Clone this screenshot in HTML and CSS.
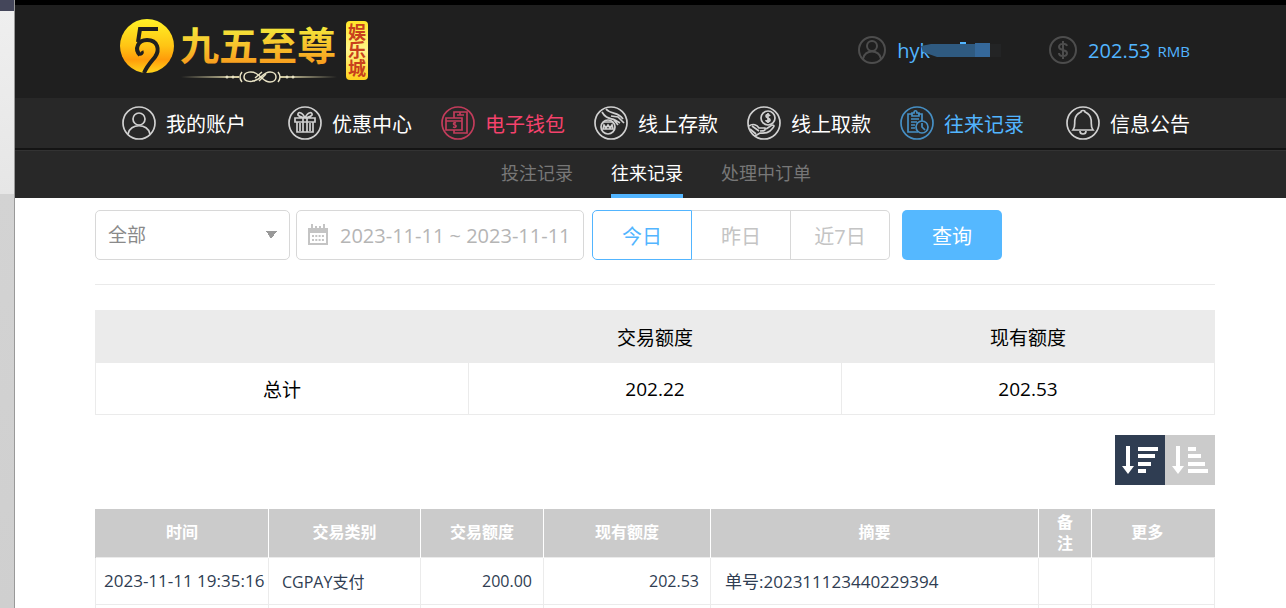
FILE: index.html
```html
<!DOCTYPE html>
<html lang="zh-CN">
<head>
    <meta charset="UTF-8">
    <meta name="viewport" content="width=device-width, initial-scale=1.0">
    <title>往来记录</title>
    <link rel="stylesheet" href="styles.css">
</head>
<body>
    <div class="edge"></div>
    <div class="page">
        <header class="header">
            <a href="#" class="logo" aria-label="九五至尊娱乐城">
                <svg width="252" height="68" viewBox="118 16 252 68">
                    <defs>
                        <linearGradient id="gold" x1="0" y1="0" x2="0" y2="1">
                            <stop offset="0" stop-color="#fff226"/>
                            <stop offset="0.5" stop-color="#ffc414"/>
                            <stop offset="0.75" stop-color="#ff9c0a"/>
                            <stop offset="1" stop-color="#ffd51c"/>
                        </linearGradient>
                        <linearGradient id="goldTag" x1="0" y1="0" x2="0" y2="1">
                            <stop offset="0" stop-color="#ffe629"/>
                            <stop offset="0.5" stop-color="#fff58a"/>
                            <stop offset="1" stop-color="#ffd01c"/>
                        </linearGradient>
                        <linearGradient id="goldText" x1="0" y1="0" x2="0" y2="1">
                            <stop offset="0.2" stop-color="#f4ea3c"/>
                            <stop offset="0.9" stop-color="#f89a1c"/>
                        </linearGradient>
                        <linearGradient id="line" x1="0" y1="0" x2="1" y2="0">
                            <stop offset="0" stop-color="#e8dfb0" stop-opacity="0"/>
                            <stop offset="0.4" stop-color="#e8dfb0"/>
                            <stop offset="0.6" stop-color="#e8dfb0"/>
                            <stop offset="1" stop-color="#e8dfb0" stop-opacity="0"/>
                        </linearGradient>
                    </defs>
                    <circle cx="147" cy="46" r="27" fill="url(#gold)"/>
                    <g fill="none" stroke="#1f1f1f" stroke-width="4">
                        <path d="M158 29H140L138 42"/>
                        <path d="M140 55C134 49 138 40 147 40C158 40 160 50 155 57C151 62 147 66 144 73"/>
                        <path d="M139 54C141 55 143 53 142 51" stroke-width="3"/>
                    </g>
                    <text x="180" y="60" class="logo-name" fill="url(#goldText)">九五至尊</text>
                    <rect x="181" y="76" width="156" height="2" fill="url(#line)"/>
                    <rect x="239" y="71" width="41" height="11" fill="#1f1f1f"/>
                    <g fill="none" stroke="#e8e2c4" stroke-width="1.5">
                        <path d="M242 72Q238 77 242 82M278 72Q282 77 278 82"/>
                        <path d="M257 79C253 83 244 82 244 77C244 71 253 71 257 74C263 78 264 82 270 82C278 82 278 72 270 72C262 72 260 82 252 81"/>
                        <path d="M255 78L262 72M259 81L266 74"/>
                    </g>
                    <g fill="#e8e2c4"><circle cx="227" cy="77" r="1.5"/><circle cx="233" cy="77" r="1.5"/><circle cx="287" cy="77" r="1.5"/><circle cx="293" cy="77" r="1.5"/></g>
                    <rect x="346" y="21" width="22" height="59" rx="4" fill="url(#goldTag)"/>
                    <text class="logo-tag" x="357" y="23">娱乐城</text>
                </svg>
            </a>
            <div class="user">
                <svg class="user-icon" viewBox="0 0 28 28"><circle cx="14" cy="14" r="13"/><circle cx="14" cy="10" r="5"/><path d="M5 23C6 13 22 13 23 23"/></svg>
                <span>hyk</span>
                <svg class="mask" width="80" height="20" viewBox="0 0 80 20">
                    <path d="M0 6L10 4H69V17H16L2 12Z" fill="#2f5a80"/>
                    <path d="M54 3H69V17H54Z" fill="#35689a"/>
                    <path d="M39 3H45" stroke="#52b5ff" stroke-width="2"/>
                    <path d="M69 4H84V17H69Z" fill="#232425"/>
                </svg>
            </div>
            <div class="balance">
                <svg class="user-icon" viewBox="0 0 28 28"><circle cx="14" cy="14" r="13"/><path d="M18 10C17 7 10 7 10 11C10 15 18 13 18 17C18 21 10 21 10 17M14 5V23"/></svg>
                <span>202.53</span>
                <small>RMB</small>
            </div>
        </header>

        <nav class="nav">
            <a href="#">
                <svg viewBox="0 0 34 34"><circle cx="17" cy="17" r="16"/><circle cx="17" cy="13" r="6"/><path d="M6 28C8 17 26 17 28 28"/></svg>
                我的账户
            </a>
            <a href="#">
                <svg viewBox="0 0 34 34"><circle cx="17" cy="17" r="16"/><path d="M7 12H27V16H7ZM9 16V26H25V16M15 12V26M19 12V26M12 17V25M22 17V25M17 12C14 5 9 6 10 9C11 11 14 11 17 12C20 5 25 6 24 9C23 11 20 11 17 12"/></svg>
                优惠中心
            </a>
            <a href="#" class="wallet">
                <svg viewBox="0 0 34 34"><circle cx="17" cy="17" r="16"/><path d="M13 12V6H26V27H13V24M5 12H21V24H5ZM5 15H21M16 9H23M19 6V9M15 17C12 16 12 19 14 19C16 20 15 22 12 21"/></svg>
                电子钱包
            </a>
            <a href="#">
                <svg viewBox="0 0 34 34"><circle cx="17" cy="17" r="16"/><circle cx="14" cy="21" r="7"/><path d="M9 23L10 19L12 22L14 19L16 22L18 19L19 23ZM8 6C12 13 16 12 21 14L26 17M12 3C17 9 24 5 29 13M17 10L24 11L30 17M20 14L24 19M9 16H19"/></svg>
                线上存款
            </a>
            <a href="#">
                <svg viewBox="0 0 34 34"><circle cx="17" cy="17" r="16"/><circle cx="21" cy="12" r="7"/><path d="M23 10C22 8 19 8 19 10C19 12 23 12 23 14C23 16 19 16 19 14M21 7V17M2 20C6 17 10 19 12 22H18C19 25 16 25 13 25M19 23L25 19C29 19 26 22 23 25C19 28 16 27 13 27L8 30M3 23L9 28M5 20L12 25"/></svg>
                线上取款
            </a>
            <a href="#" class="active">
                <svg viewBox="0 0 34 34"><circle cx="17" cy="17" r="16"/><path d="M18 26H8V8H12M18 8H22V15M12 10V7H14C14 4 17 4 17 7H19V10ZM11 13H19M11 16H17M11 19H15M11 22H15"/><circle cx="22" cy="21" r="6"/><path d="M22 17V21L25 24"/></svg>
                往来记录
            </a>
            <a href="#">
                <svg viewBox="0 0 34 34"><circle cx="17" cy="17" r="16"/><path d="M7 24C10 20 8 17 9 13C10 8 13 7 15 6C15 4 19 4 19 6C21 7 24 8 25 13C26 17 24 20 27 24ZM14 25C14 29 20 29 20 25"/></svg>
                信息公告
            </a>
        </nav>

        <nav class="subnav">
            <a href="#">投注记录</a>
            <a href="#" class="active">往来记录</a>
            <a href="#">处理中订单</a>
        </nav>

        <main class="content">
            <form class="filters">
                <select class="type" aria-label="交易类别">
                    <option>全部</option>
                </select>
                <label class="date">
                    <svg width="22" height="22" viewBox="0 0 22 22">
                        <path d="M1 4H21V9H1Z" fill="#c4c4c4"/>
                        <path d="M2 5H20V20H2Z" fill="none" stroke="#c4c4c4" stroke-width="2"/>
                        <path d="M5 0V5M17 0V5M9 2V5M13 2V5" stroke="#c4c4c4" stroke-width="2"/>
                        <path d="M5 12H17M5 16H17" stroke="#c4c4c4" stroke-width="2" stroke-dasharray="2 1.3"/>
                    </svg>
                    <input type="text" value="2023-11-11 ~ 2023-11-11" aria-label="日期">
                </label>
                <div class="range">
                    <button type="button" class="active">今日</button>
                    <button type="button">昨日</button>
                    <button type="button">近7日</button>
                </div>
                <button type="button" class="search">查询</button>
            </form>

            <table class="summary">
                <thead>
                    <tr><th></th><th>交易额度</th><th>现有额度</th></tr>
                </thead>
                <tbody>
                    <tr><td>总计</td><td>202.22</td><td>202.53</td></tr>
                </tbody>
            </table>

            <div class="sort">
                <button type="button" class="active" aria-label="降序">
                    <svg width="50" height="50" viewBox="0 0 50 50"><path d="M11 11H15V31H19L13 39L7 31H11Z"/><path d="M23 12H43V16H23ZM23 19H40V23H23ZM23 27H36V31H23ZM23 34H31V38H23Z"/></svg>
                </button>
                <button type="button" aria-label="升序">
                    <svg width="50" height="50" viewBox="0 0 50 50"><path d="M11 11H15V31H19L13 39L7 31H11Z"/><path d="M23 12H31V16H23ZM23 19H36V23H23ZM23 27H40V31H23ZM23 34H43V38H23Z"/></svg>
                </button>
            </div>

            <table class="records">
                <colgroup>
                    <col class="c-time"><col class="c-type"><col class="c-amount"><col class="c-balance"><col><col class="c-note"><col class="c-more">
                </colgroup>
                <thead>
                    <tr><th>时间</th><th>交易类别</th><th>交易额度</th><th>现有额度</th><th>摘要</th><th>备注</th><th>更多</th></tr>
                </thead>
                <tbody>
                    <tr><td class="time">2023-11-11 19:35:16</td><td>CGPAY支付</td><td class="num">200.00</td><td class="num">202.53</td><td class="memo">单号:202311123440229394</td><td></td><td></td></tr>
                    <tr><td></td><td></td><td></td><td></td><td></td><td></td><td></td></tr>
                </tbody>
            </table>
        </main>
    </div>
</body>
</html>
```
FILE: styles.css
```css
* { margin: 0; padding: 0; box-sizing: border-box; }
body { display: flex; height: 100vh; overflow: hidden; background: #fff; font-family: "Open Sans", "Noto Sans CJK SC", sans-serif; color: #000; }
a { text-decoration: none; color: inherit; }
button, input, select { font: inherit; }
button { cursor: pointer; }

.edge { flex: none; width: 15px; border-right: 1px solid #999; background: linear-gradient(#44465a 11px, #efefef 11px, #e6e6e6 194px, #d3d3d3 194px, #cfcfcf); }
.page { flex: 1; min-width: 0; }

.header { display: flex; align-items: center; height: 98px; padding: 0 96px 3px 103px; border-top: 5px solid #000; background: #1f1f1f; color: #52b5ff; font-size: 20px; }
.logo { margin-right: auto; }
.logo svg { display: block; }
.logo-name { font-family: "Noto Sans CJK SC", sans-serif; font-size: 39px; font-weight: bold; }
.logo-tag { font-family: "Noto Sans CJK SC", sans-serif; font-size: 18px; font-weight: bold; fill: #c8401c; writing-mode: vertical-rl; }
.user, .balance { display: flex; align-items: center; gap: 11px; }
.user { margin-right: 48px; }
.user-icon { width: 28px; height: 28px; fill: none; stroke: #4d4d4d; stroke-width: 2; }
.mask { margin-left: -20px; }
.balance small { margin: 2px 0 0 -4px; font-size: 15px; }

.nav { display: flex; justify-content: center; gap: 29px; height: 52px; padding-left: 11px; border-bottom: 2px solid #141414; background: #282828; color: #fff; font-size: 20px; }
.nav a { display: flex; align-items: center; gap: 10px; white-space: nowrap; }
.nav a:first-child { margin-right: 13px; }
.nav a:last-child { margin-left: 13px; }
.nav svg { width: 34px; height: 34px; fill: none; stroke: #d0d0d0; stroke-width: 1.7; }
.nav .wallet { color: #f5426c; }
.nav .wallet svg { stroke: #c23c5b; }
.nav .active { color: #52b5ff; }
.nav .active svg { stroke: #468fc4; }

.subnav { display: flex; justify-content: center; gap: 38px; height: 48px; padding-left: 11px; border-top: 1px solid #333; background: #282828; color: #777; font-size: 18px; line-height: 44px; }
.subnav .active { color: #fff; border-bottom: 4px solid #52b5ff; }

.content { padding: 12px 71px 0 80px; }
.filters { display: flex; height: 75px; padding-bottom: 24px; border-bottom: 1px solid #eaeaea; font-size: 20px; }
.type { appearance: none; width: 195px; margin-right: 6px; padding: 0 12px; border: 1px solid #d8d8d8; border-radius: 5px; color: #8a8a8a; font-size: 19px;
    background: linear-gradient(to top right, transparent 50%, #999 51%) right 18px center / 5px 8px no-repeat, linear-gradient(to top left, transparent 50%, #999 51%) right 12px center / 6px 8px no-repeat, #fff; }
.date { display: flex; align-items: center; gap: 11px; width: 288px; margin-right: 8px; padding: 0 10px; border: 1px solid #d8d8d8; border-radius: 5px; }
.date svg { flex: none; }
.date input { width: 100%; border: none; outline: none; background: none; color: #b5b5b5; }
.range { display: flex; margin-right: 12px; }
.range button { width: 99px; border: 1px solid #d8d8d8; border-left: none; background: #fff; color: #c4c4c4; }
.range .active { width: 100px; border: 1px solid #52b5ff; border-radius: 5px 0 0 5px; color: #52b5ff; }
.range button:last-child { border-radius: 0 5px 5px 0; }
.search { width: 100px; border: none; border-radius: 5px; background: #55b8ff; color: #fff; }

table { width: 100%; border-collapse: collapse; table-layout: fixed; }
.summary { margin-top: 25px; font-size: 19px; text-align: center; }
.summary th { height: 52px; border: 1px solid #ebebeb; background: #ebebeb; font-weight: normal; }
.summary td { height: 52px; border: 1px solid #ebebeb; }

.sort { display: flex; justify-content: flex-end; margin: 20px 0 24px; }
.sort button { width: 50px; height: 50px; border: none; background: #cbcbcb; }
.sort .active { background: #2f3d52; }
.sort svg { display: block; fill: #fff; }

.records { font-size: 16px; color: #2f3d52; }
.records th { height: 48px; padding: 0 14px; border-left: 1px solid #fff; background: #cbcbcb; color: #fff; line-height: 21px; }
.records th:first-child { border-left-color: #cbcbcb; }
.records th:last-child { padding-right: 26px; }
.records td { height: 47px; padding: 0 13px; border: 1px solid #ebebeb; white-space: nowrap; }
.records .time { padding: 0 0 0 8px; font-size: 17px; }
.records .num { padding-right: 11px; text-align: right; }
.records .memo { padding-left: 14px; font-size: 17px; }
.c-time { width: 173px; }
.c-type { width: 152px; }
.c-amount { width: 123px; }
.c-balance { width: 167px; }
.c-note { width: 53px; }
.c-more { width: 123px; }
```
